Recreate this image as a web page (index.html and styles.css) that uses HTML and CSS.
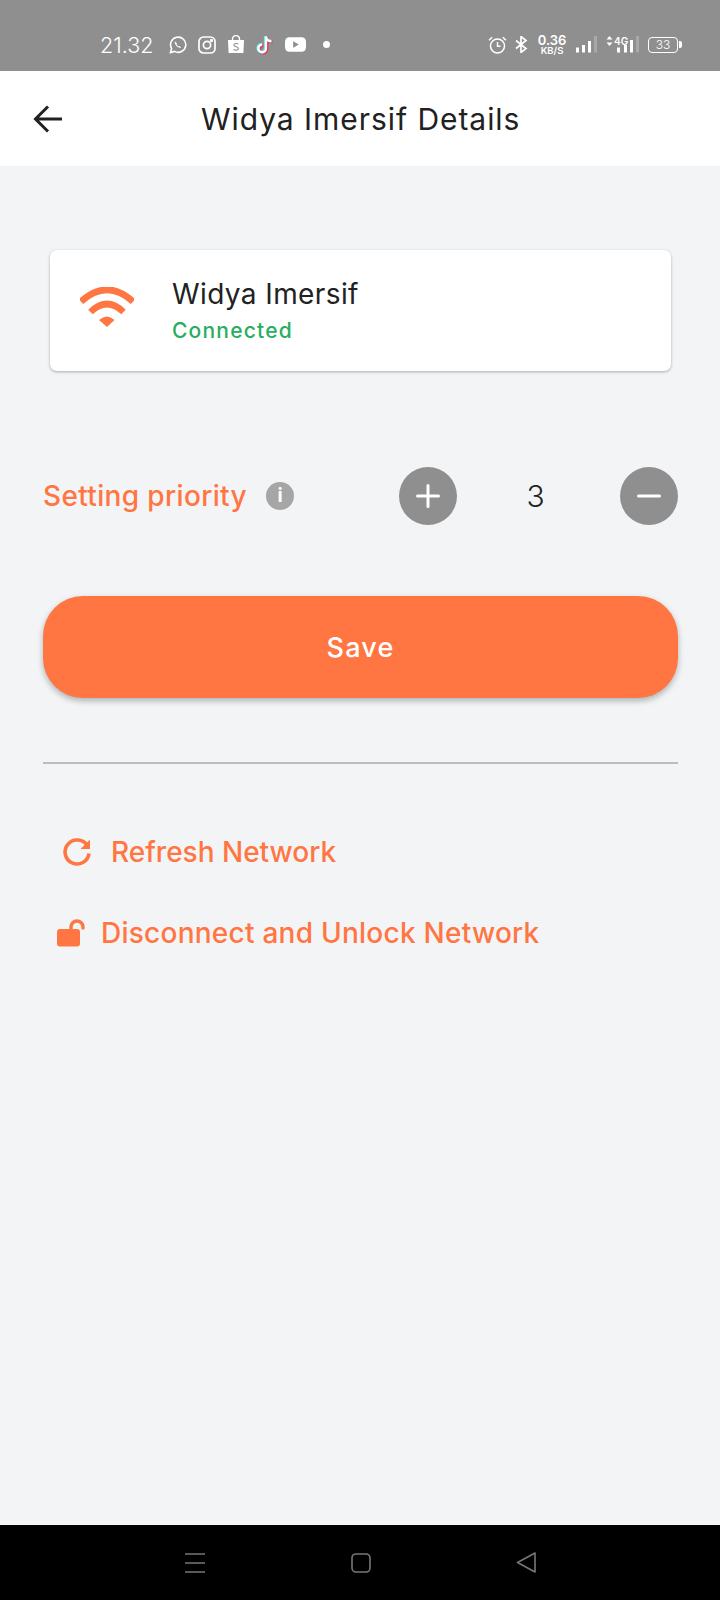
FILE: index.html
```html
<!DOCTYPE html>
<html lang="en">
<head>
  <meta charset="UTF-8" />
  <title>Widya Imersif Details</title>
  <link rel="stylesheet" href="styles.css">
</head>
<body>
  <div class="status">
    <span class="time">21.32</span>
    <div class="notif">
      <svg width="18" height="18" viewBox="0 0 18 18" fill="none" stroke="#fff" stroke-width="1.6"><path d="M1.5 16.5l1.1-4A7.6 7.6 0 1 1 5.6 15.4z"/><path d="M6 5.500c-.8 1 .0 3 1.500 4.500s3.500 2.300 4.500 1.500l-1.500-1.500-1 .5-2-2 .5-1z" fill="#fff" stroke="none"/></svg>
      <svg width="18" height="18" viewBox="0 0 18 18" fill="none" stroke="#fff" stroke-width="1.700"><rect x="1" y="1" width="16" height="16" rx="4.500"/><circle cx="9" cy="9" r="3.600"/><circle cx="13.500" cy="4.500" r=".8" fill="#fff"/></svg>
      <svg width="18" height="19" viewBox="0 0 18 19"><path d="M1 5h16l-.6 13H1.600z" fill="#fff"/><path d="M5.500 6V4a3.500 3.500 0 0 1 7 0v2" fill="none" stroke="#fff" stroke-width="1.400"/><path d="M11.300 9.200C10 8 6.800 8.300 6.900 10.200c.1 2 4.500 1.300 4.500 3.400 0 1.900-3.500 2-5 .7" fill="none" stroke="#8f8f8f" stroke-width="1.100"/></svg>
      <svg width="18" height="20" viewBox="0 0 18 20" fill="none" stroke-width="3"><path d="M10 1.500v12a3.800 3.800 0 1 1-3.800-3.800M10 1.500c.3 2.800 2.200 4.600 5.500 4.800" stroke="#e5395a" transform="translate(1 .8)"/><path d="M10 1.500v12a3.800 3.800 0 1 1-3.800-3.800M10 1.500c.3 2.800 2.200 4.600 5.500 4.800" stroke="#6fe3e6" transform="translate(-.6 -.4)"/><path d="M10 1.500v12a3.800 3.800 0 1 1-3.800-3.800M10 1.500c.3 2.800 2.200 4.600 5.500 4.800" stroke="#fff" stroke-width="2.200"/></svg>
      <svg width="21" height="15" viewBox="0 0 22 15"><rect width="22" height="15" rx="4.500" fill="#fff"/><path d="M8.500 4.200l6 3.300-6 3.300z" fill="#8f8f8f"/></svg>
      <i class="dot"></i>
    </div>
    <div class="sys">
      <svg class="alarm" width="19" height="18" viewBox="0 0 19 18" fill="none" stroke="#fff" stroke-width="1.500"><circle cx="9.500" cy="10" r="7"/><path d="M9.500 6v4.300h3M1 4.200L4.200 1.200M18 4.200L14.800 1.200"/></svg>
      <svg class="bt" width="13" height="17" viewBox="0 0 13 17" fill="none" stroke="#fff" stroke-width="1.700"><path d="M1 4.500l10 8-5 4V.5l5 4-10 8"/></svg>
      <div class="speed"><b>0.36</b><small>KB/S</small></div>
      <svg class="sig" width="22" height="17" viewBox="0 0 22 17"><rect x="0" y="11.500" width="3" height="5" fill="#fff"/><rect x="6" y="9" width="3" height="7.500" fill="#fff"/><rect x="12" y="5" width="3" height="11.500" fill="#fff"/><rect x="18" y="0" width="3" height="16.500" fill="#a8a8a8"/></svg>
      <div class="lte">
        <svg width="7" height="10" viewBox="0 0 7 10" fill="#fff"><path d="M3.500 0L6.500 3.500H.5zM3.500 10L.5 6.500h6z"/></svg>
        <span>4G</span>
        <svg class="lte-bars" width="22" height="17" viewBox="0 0 22 17"><rect x="0" y="11.500" width="3" height="5" fill="#fff"/><rect x="7" y="9" width="3" height="7.500" fill="#fff"/><rect x="13" y="4" width="3" height="12.500" fill="#fff"/><rect x="19" y="0" width="3" height="16.500" fill="#a8a8a8"/></svg>
      </div>
      <div class="batt"><span>33</span></div>
    </div>
  </div>

  <header class="appbar">
    <svg class="back" width="30" height="28" viewBox="0 0 30 28" fill="none" stroke="#212121" stroke-width="3"><path d="M29 14H3M15 1.500L2.500 14 15 26.500"/></svg>
    <h1>Widya Imersif Details</h1>
  </header>

  <main class="content">
    <section class="card">
      <svg class="wifi" width="54" height="40" viewBox="0 0 54 40" fill="#ff7643"><path d="M1 14.500Q27-9 53 14.500" fill="none" stroke="#ff7643" stroke-width="6.500"/><path d="M10.500 25Q27 9 43.500 25" fill="none" stroke="#ff7643" stroke-width="6.500"/><path d="M19 33Q27 26 34.500 33L27 40z"/></svg>
      <div class="net-text">
        <div class="net-name">Widya Imersif</div>
        <div class="net-state">Connected</div>
      </div>
    </section>

    <div class="priority">
      <span class="priority-label">Setting priority</span>
      <span class="info">i</span>
      <div class="stepper">
        <button class="round"><svg width="24" height="24" viewBox="0 0 24 24" stroke="#fff" stroke-width="3" stroke-linecap="round"><path d="M12 1.500v21M1.500 12h21"/></svg></button>
        <span class="count">3</span>
        <button class="round"><svg width="24" height="24" viewBox="0 0 24 24" stroke="#fff" stroke-width="3" stroke-linecap="round"><path d="M1.500 12h21"/></svg></button>
      </div>
    </div>

    <button class="save">Save</button>
    <hr class="divider">

    <a class="action refresh">
      <svg width="30" height="30" viewBox="0 0 30 30" fill="none" stroke="#ff7643" stroke-width="3.600"><path d="M25.500 9A12 12 0 1 0 27 16.500"/><path d="M28 2.500v9.500h-9.500z" fill="#ff7643" stroke="none"/></svg>
      <span>Refresh Network</span>
    </a>
    <a class="action unlock">
      <svg width="31" height="28" viewBox="0 0 31 28" fill="none"><rect x="1" y="10" width="23" height="17.500" rx="3" fill="#ff7643"/><path d="M15 11V8a6 6 0 0 1 12 0v1" stroke="#ff7643" stroke-width="3.400" stroke-linecap="round"/></svg>
      <span>Disconnect and Unlock Network</span>
    </a>
  </main>

  <nav class="navbar">
    <svg width="22" height="20" viewBox="0 0 22 20" stroke="#777" stroke-width="1.600"><path d="M1 1h20M1 10h20M1 19h20"/></svg>
    <svg width="20" height="20" viewBox="0 0 20 20" fill="none" stroke="#777" stroke-width="1.600"><rect x="1" y="1" width="18" height="18" rx="4"/></svg>
    <svg width="20" height="21" viewBox="0 0 20 21" fill="none" stroke="#777" stroke-width="1.600" stroke-linejoin="round"><path d="M1.500 10.500L19 1v19z"/></svg>
  </nav>
</body>
</html>
```

FILE: styles.css
```css
* {
  box-sizing: border-box;
}
body {
  margin: 0;
  width: 720px;
  height: 1600px;
  display: flex;
  flex-direction: column;
  font-family: Inter, "Open Sans", sans-serif;
  background: #f3f4f6;
  color: #212121;
}
.status {
  height: 71px;
  flex: none;
  background: #8f8f8f;
  color: #fff;
  display: flex;
  align-items: center;
  padding: 18px 0 0 100px;
}
.time {
  width: 69px;
  font-size: 21.500px;
  font-weight: 300;
}
.notif {
  display: flex;
  align-items: center;
  gap: 11px;
  width: 319px;
}
.dot {
  width: 7px;
  height: 7px;
  border-radius: 50%;
  background: #fff;
  margin-left: 6px;
}
.sys {
  display: flex;
  align-items: center;
}
.bt {
  margin-left: 8px;
}
.speed {
  margin-left: 9px;
  width: 30px;
  display: flex;
  flex-direction: column;
  align-items: center;
  line-height: 9px;
}
.speed b {
  font-size: 13px;
  font-weight: 600;
  line-height: 11px;
}
.speed small {
  font-size: 9.500px;
  font-weight: 600;
}
.sig {
  margin-left: 9px;
}
.lte {
  margin-left: 8px;
  width: 33px;
  height: 17px;
  position: relative;
  display: flex;
  align-items: flex-start;
  gap: 1px;
  font-size: 10px;
  line-height: 10px;
  font-weight: 600;
}
.lte-bars {
  position: absolute;
  left: 11px;
  top: 0;
}
.batt {
  margin-left: 9px;
  width: 30px;
  height: 16px;
  border: 1.500px solid #fff;
  border-radius: 4px;
  font-size: 12px;
  font-weight: 300;
  line-height: 13px;
  text-align: center;
  position: relative;
}
.batt::after {
  content: "";
  position: absolute;
  right: -5px;
  top: 3px;
  width: 3px;
  height: 7px;
  background: #fff;
  border-radius: 0 2px 2px 0;
}
.appbar {
  height: 95px;
  flex: none;
  background: #fff;
  display: flex;
  align-items: center;
  padding-left: 33px;
}
.appbar h1 {
  margin: 0 0 0 138px;
  font-size: 30px;
  font-weight: 400;
  letter-spacing: .95px;
}
.content {
  flex: 1;
  padding: 84px 42px 0 43px;
}
.card {
  margin: 0 7px;
  height: 121px;
  background: #fff;
  border-radius: 7px;
  box-shadow: 0 1px 3px rgba(0, 0, 0, .3);
  display: flex;
  align-items: center;
  padding-left: 30px;
  gap: 38px;
}
.wifi {
  margin-top: -7px;
}
.net-text {
  margin-top: 2px;
}
.net-name {
  font-size: 28px;
  line-height: 38px;
  letter-spacing: .4px;
}
.net-state {
  font-size: 21px;
  font-weight: 500;
  color: #27ae60;
  line-height: 36px;
  letter-spacing: 1.200px;
}
.priority {
  margin-top: 96px;
  height: 58px;
  display: flex;
  align-items: center;
}
.priority-label {
  font-size: 28px;
  font-weight: 500;
  color: #ff7643;
  width: 223px;
  letter-spacing: .35px;
}
.info {
  width: 28px;
  height: 28px;
  border-radius: 50%;
  background: #a6a6a6;
  color: #fff;
  font-size: 19px;
  font-weight: 700;
  line-height: 28px;
  text-align: center;
}
.stepper {
  margin-left: auto;
  display: flex;
  align-items: center;
}
.round {
  width: 58px;
  height: 58px;
  border: none;
  border-radius: 50%;
  background: #8f8f8f;
  padding: 0;
  display: flex;
  align-items: center;
  justify-content: center;
}
.count {
  width: 163px;
  padding-right: 6px;
  text-align: center;
  font-size: 30px;
  font-weight: 300;
}
.save {
  display: block;
  width: 100%;
  margin-top: 71px;
  height: 102px;
  border: none;
  border-radius: 40px;
  background: #ff7643;
  color: #fff;
  font: 500 27px Inter, sans-serif;
  letter-spacing: 1.200px;
  box-shadow: 0 3px 6px rgba(0, 0, 0, .28);
}
.divider {
  margin: 64px 0 0;
  height: 2px;
  border: none;
  background: #bcbcc2;
}
.action {
  display: flex;
  align-items: center;
  color: #ff7643;
  font-size: 28px;
  font-weight: 500;
}
.refresh {
  margin-top: 73px;
  height: 30px;
  padding-left: 19px;
  gap: 19px;
}
.unlock {
  margin-top: 51px;
  height: 30px;
  padding-left: 13px;
  gap: 14px;
  letter-spacing: .25px;
}
.navbar {
  height: 75px;
  flex: none;
  background: #000;
  display: flex;
  align-items: center;
  padding: 0 184px;
  justify-content: space-between;
}
```
